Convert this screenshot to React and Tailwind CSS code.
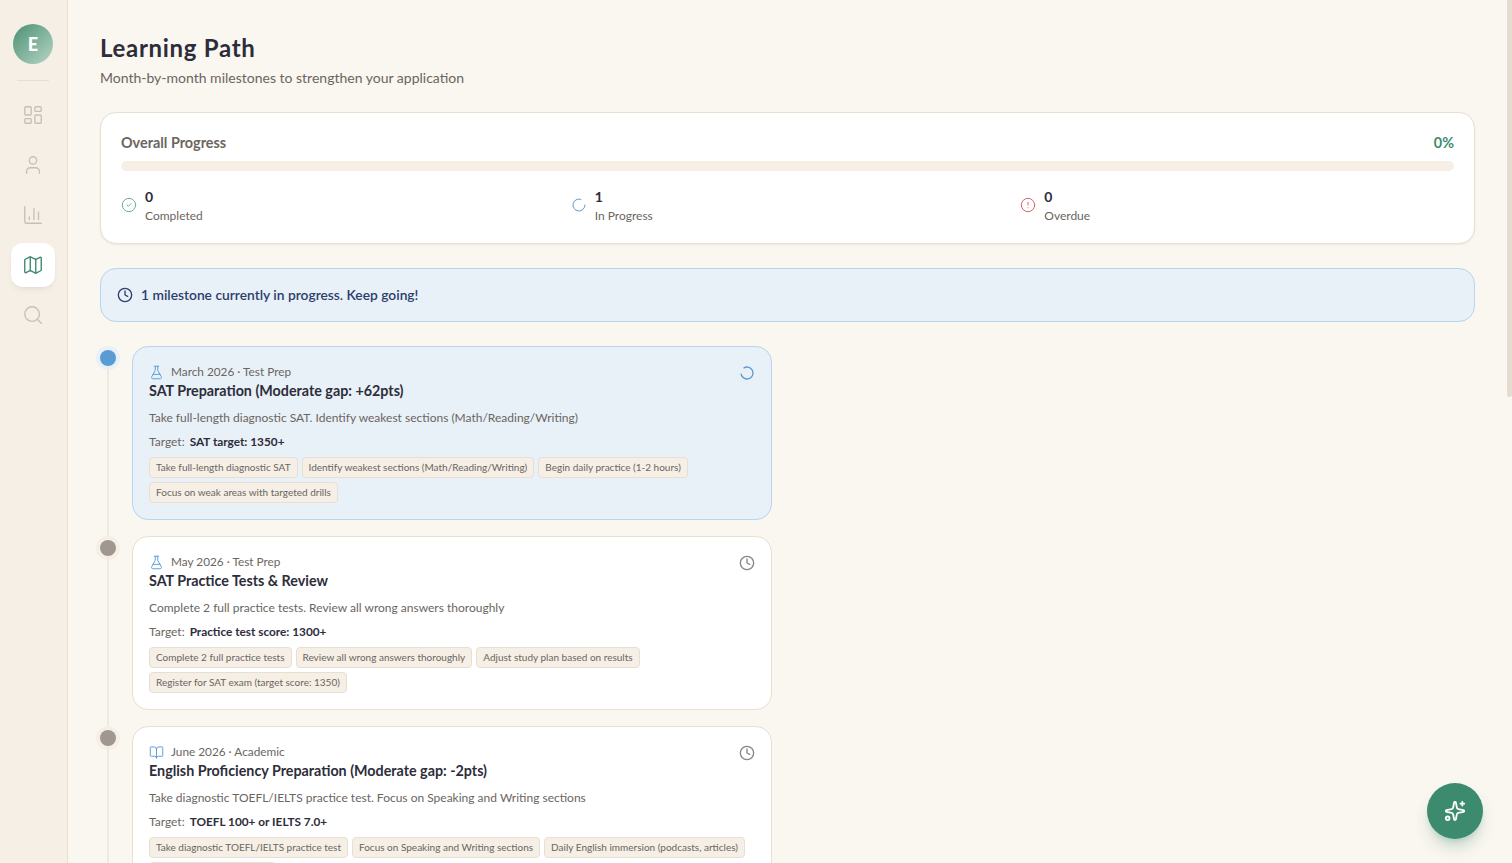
import React from "react";
import {
  LayoutDashboard,
  User,
  ChartColumn,
  Map as MapIcon,
  Search,
  CircleCheck,
  LoaderCircle,
  CircleAlert,
  Clock,
  FlaskConical,
  BookOpen,
  Sparkles,
} from "lucide-react";

const NAV = [
  { icon: LayoutDashboard },
  { icon: User },
  { icon: ChartColumn },
  { icon: MapIcon, active: true },
  { icon: Search },
];

const STATS = [
  { value: "0", label: "Completed", icon: CircleCheck, color: "text-[#6fae8c]" },
  { value: "1", label: "In Progress", icon: LoaderCircle, color: "text-[#5b9bd5]" },
  { value: "0", label: "Overdue", icon: CircleAlert, color: "text-[#d9626b]" },
];

const MILESTONES = [
  {
    date: "March 2026 · Test Prep",
    title: "SAT Preparation (Moderate gap: +62pts)",
    desc: "Take full-length diagnostic SAT. Identify weakest sections (Math/Reading/Writing)",
    target: "SAT target: 1350+",
    icon: FlaskConical,
    active: true,
    tasks: [
      "Take full-length diagnostic SAT",
      "Identify weakest sections (Math/Reading/Writing)",
      "Begin daily practice (1-2 hours)",
      "Focus on weak areas with targeted drills",
    ],
  },
  {
    date: "May 2026 · Test Prep",
    title: "SAT Practice Tests & Review",
    desc: "Complete 2 full practice tests. Review all wrong answers thoroughly",
    target: "Practice test score: 1300+",
    icon: FlaskConical,
    tasks: [
      "Complete 2 full practice tests",
      "Review all wrong answers thoroughly",
      "Adjust study plan based on results",
      "Register for SAT exam (target score: 1350)",
    ],
  },
  {
    date: "June 2026 · Academic",
    title: "English Proficiency Preparation (Moderate gap: -2pts)",
    desc: "Take diagnostic TOEFL/IELTS practice test. Focus on Speaking and Writing sections",
    target: "TOEFL 100+ or IELTS 7.0+",
    icon: BookOpen,
    tasks: [
      "Take diagnostic TOEFL/IELTS practice test",
      "Focus on Speaking and Writing sections",
      "Daily English immersion (podcasts, articles)",
      "Book the official test date",
    ],
  },
];

function Milestone({ item }) {
  const Icon = item.icon;
  return (
    <div className="flex">
      <div className="flex w-8 shrink-0 flex-col">
        <div
          className={`mt-1 h-4 w-4 shrink-0 rounded-full ${
            item.active ? "bg-[#5b9bd5] ring-4 ring-[#e8f0f8]" : "bg-[#a09890] ring-4 ring-[#f5efe6]"
          }`}
        />
        <div className="ml-[7px] w-0.5 flex-1 bg-[#f0e9de]" />
      </div>
      <div className="pb-4">
        <div
          className={`relative h-[174px] w-[640px] rounded-2xl border px-4 pt-4 ${
            item.active ? "border-[#b8d4ee] bg-[#e8f0f8]" : "border-[#e8dfd2] bg-white"
          }`}
        >
          <div className="flex h-[18px] items-center gap-[7px] text-[11.8px] text-[#6b6560]">
            <Icon size={15} strokeWidth={1.5} className="text-[#5b9bd5]" />
            <span>{item.date}</span>
          </div>
          <h3 className="text-[14.3px] leading-[20px] font-bold text-[#2d2d3a]">{item.title}</h3>
          <p className="mt-[8px] text-xs leading-[18px] text-[#6b6560]">{item.desc}</p>
          <div className="mt-[6px] flex h-[18px] items-center gap-[5px] text-xs text-[#6b6560]">
            <span>Target:</span>
            <span className="text-[11.8px] font-bold text-[#2d2d3a]">{item.target}</span>
          </div>
          <div className="mt-[6px] flex flex-wrap gap-1">
            {item.tasks.map((task) => (
              <span
                key={task}
                className="flex h-[21px] items-center rounded border border-[#e8dfd2] bg-[#f5efe6] px-1.5 text-[10px] text-[#6b6560]"
              >
                {task}
              </span>
            ))}
          </div>
          <div className="absolute top-[18px] right-4">
            {item.active ? (
              <LoaderCircle size={16} className="-rotate-[120deg] text-[#5b9bd5]" />
            ) : (
              <Clock size={16} className="text-[#8a8580]" />
            )}
          </div>
        </div>
      </div>
    </div>
  );
}

export default function App() {
  return (
    <div className="flex h-screen overflow-hidden bg-[#faf6f0] font-['Lato','Liberation_Sans',sans-serif]">
      {/* Sidebar */}
      <aside className="flex w-[68px] shrink-0 flex-col items-center border-r border-[#e8dfd2] bg-[#f5efe6] pt-6 pr-px">
        <div className="flex h-10 w-10 items-center justify-center rounded-full bg-gradient-to-br from-[#4a9075] to-[#b6d6c5] text-lg font-black text-white">
          E
        </div>
        <div className="mt-4 mb-3 h-px w-8 bg-[#e8dfd2]" />
        <nav className="flex flex-col gap-1.5">
          {NAV.map(({ icon: Icon, active }, i) => (
            <div
              key={i}
              className={`flex h-11 w-11 items-center justify-center rounded-xl ${
                active ? "bg-white text-[#3d8b6e] shadow-md shadow-black/5" : "text-[#c9c0b5]"
              }`}
            >
              <Icon size={22} strokeWidth={1.5} />
            </div>
          ))}
        </nav>
      </aside>

      {/* Main */}
      <main className="h-full flex-1 overflow-hidden p-8">
        <h1 className="text-2xl leading-8 font-bold tracking-[0.7px] text-[#2d2d3a]">Learning Path</h1>
        <p className="mt-1 text-sm leading-5 text-[#6b6560]">
          Month-by-month milestones to strengthen your application
        </p>

        <section className="mt-6 h-[132px] rounded-2xl border border-[#e8dfd2] bg-white px-5 pt-5 shadow-sm shadow-black/5">
          <div className="flex items-center justify-between text-[14.4px] leading-5 font-bold">
            <span className="text-[#6b6560]">Overall Progress</span>
            <span className="text-[#3d8b6e]">0%</span>
          </div>
          <div className="mt-2 h-2.5 rounded-full bg-[#f5efe6]" />
          <div className="mt-4 grid grid-cols-3 gap-4">
            {STATS.map((s) => {
              const Icon = s.icon;
              return (
                <div key={s.label} className="flex items-center gap-2">
                  <Icon size={16} strokeWidth={1.5} className={`-mt-0.5 ${s.color}`} />
                  <div>
                    <div className="text-sm leading-5 font-bold text-[#2d2d3a]">{s.value}</div>
                    <div className="text-xs leading-[18px] text-[#6b6560]">{s.label}</div>
                  </div>
                </div>
              );
            })}
          </div>
        </section>

        <div className="mt-6 flex h-[54px] items-center gap-2 rounded-2xl border border-[#b8d4ee] bg-[#e8f0f8] px-4 text-[13.8px] font-semibold text-[#2c3e6b]">
          <Clock size={16} />
          <span>1 milestone currently in progress. Keep going!</span>
        </div>

        <div className="mt-6 flex flex-col">
          {MILESTONES.map((m) => (
            <Milestone key={m.title} item={m} />
          ))}
        </div>
      </main>

      {/* Scrollbar */}
      <div className="w-[5px] shrink-0">
        <div className="h-[397px] rounded-b-sm bg-[#e5ddd0]" />
      </div>

      {/* Floating assistant button */}
      <button className="fixed right-[29px] bottom-[24px] flex h-14 w-14 items-center justify-center rounded-full bg-[#3d8b6e] text-white shadow-lg shadow-[#3d8b6e]/30">
        <Sparkles size={22} />
      </button>
    </div>
  );
}
